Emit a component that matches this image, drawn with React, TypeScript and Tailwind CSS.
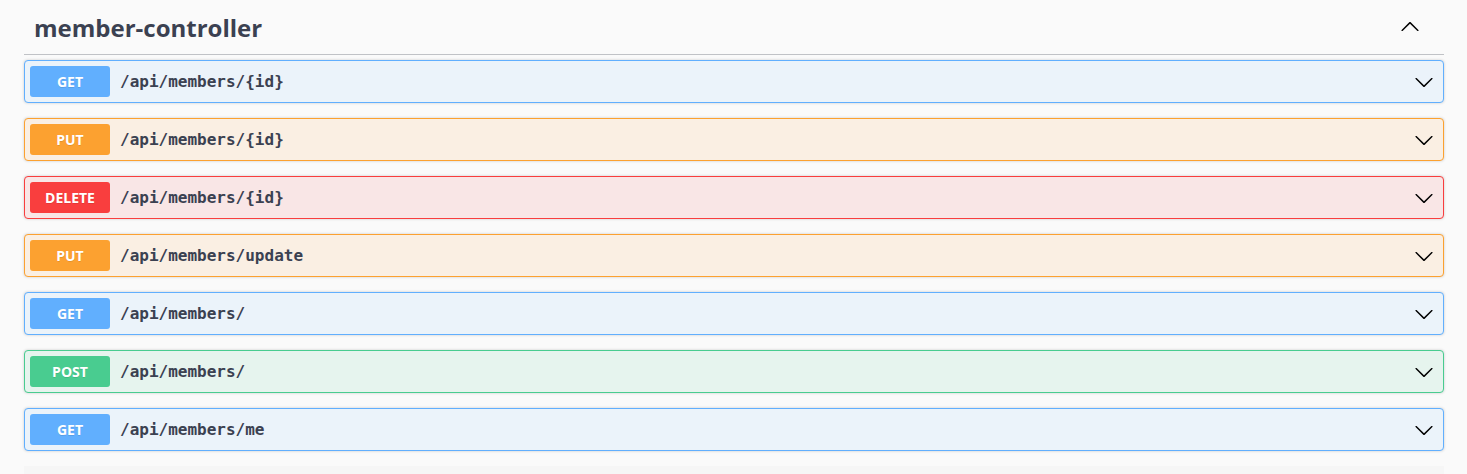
const ops = [
  { method: "GET", path: "/api/members/{id}" },
  { method: "PUT", path: "/api/members/{id}" },
  { method: "DELETE", path: "/api/members/{id}" },
  { method: "PUT", path: "/api/members/update" },
  { method: "GET", path: "/api/members/" },
  { method: "POST", path: "/api/members/" },
  { method: "GET", path: "/api/members/me" },
];

const styles: Record<string, { block: string; badge: string }> = {
  GET: { block: "bg-[#ebf3fa] border-[#61affe]", badge: "bg-[#61affe]" },
  PUT: { block: "bg-[#faefe3] border-[#fca130]", badge: "bg-[#fca130]" },
  DELETE: { block: "bg-[#f9e6e6] border-[#f93e3e]", badge: "bg-[#f93e3e]" },
  POST: { block: "bg-[#e6f4ee] border-[#49cc90]", badge: "bg-[#49cc90]" },
};

const Arrow = ({ up = false }: { up?: boolean }) => (
  <svg
    width="20"
    height="20"
    viewBox="0 0 20 20"
    className={up ? "rotate-180" : ""}
    fill="#000"
  >
    <path d="M17.418 6.109c.272-.268.709-.268.979 0s.271.701 0 .969l-7.908 7.83c-.27.268-.707.268-.979 0l-7.908-7.83c-.27-.268-.27-.701 0-.969.271-.268.709-.268.979 0L10 13.25l7.418-7.141z" />
  </svg>
);

const Operation = ({ method, path }: { method: string; path: string }) => {
  const s = styles[method];
  return (
    <div
      className={`mb-[15px] flex items-center rounded border p-[5px] shadow-[0_0_3px_rgba(0,0,0,0.19)] ${s.block}`}
    >
      <span
        className={`flex h-[31px] w-[80px] items-center justify-center rounded-[3px] text-[14px] font-bold text-white [text-shadow:0_1px_0_rgba(0,0,0,0.1)] ${s.badge}`}
        style={{ fontFamily: '"Open Sans", "Noto Sans", sans-serif' }}
      >
        {method}
      </span>
      <span
        className="flex-1 pl-[10px] pt-[1px] text-[16px] font-bold text-[#3b4151]"
        style={{ fontFamily: '"DejaVu Sans Mono", monospace' }}
      >
        {path}
      </span>
      <span className="mr-[4px] flex">
        <Arrow />
      </span>
    </div>
  );
};

export default function App() {
  return (
    <div
      className="min-h-[474px] bg-[#fafafa] pl-[24px] pr-[23px]"
      style={{ fontFamily: '"Open Sans", "Noto Sans", sans-serif' }}
    >
      <div className="mb-[5px] flex h-[55px] items-center border-b border-[rgba(59,65,81,0.3)] pl-[10px] pr-[24px]">
        <h3 className="flex-1 pt-[2px] text-[24px] font-bold text-[#3b4151]">
          member-controller
        </h3>
        <Arrow up />
      </div>
      {ops.map((op, i) => (
        <Operation key={i} method={op.method} path={op.path} />
      ))}
      <div className="h-[20px] bg-[#f6f6f6]" />
    </div>
  );
}
